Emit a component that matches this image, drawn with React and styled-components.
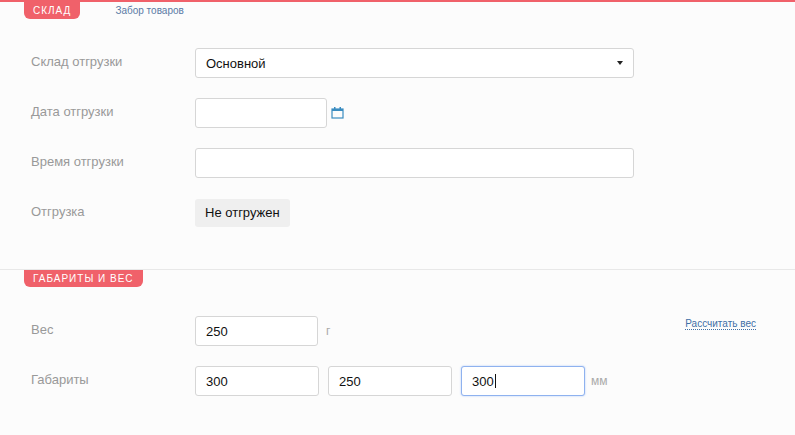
import React from "react";
import styled, { createGlobalStyle } from "styled-components";

const G = createGlobalStyle`
  body { margin:0; background:#fcfcfc; font-family:"Liberation Sans", Arial, sans-serif; }
`;
const Page = styled.div`width:795px;height:435px;overflow:hidden;border-top:2px solid #f0616a;box-sizing:border-box;`;
const Section = styled.div`position:relative;padding:${p=>p.$pad};border-top:${p=>p.$line?"1px solid #e8e8e8":"none"};`;
const TabBar = styled.div`display:flex;align-items:center;gap:35px;padding-left:24px;height:17px;`;
const Tab = styled.div`background:#f0616a;color:#fff;font-size:10px;letter-spacing:1px;font-weight:normal;padding:0 9px;height:17px;line-height:17px;border-radius:0 0 6px 6px;`;
const SubLink = styled.div`color:#5a7aa5;font-size:10px;`;
const Form = styled.div`display:flex;flex-direction:column;gap:20px;padding-left:31px;`;
const Row = styled.div`display:flex;align-items:center;height:30px;`;
const Label = styled.div`width:164px;color:#999;font-size:13px;margin-top:-3px;`;
const Box = styled.div`box-sizing:border-box;width:${p=>p.$w}px;height:30px;border:1px solid ${p=>p.$focus?"#8fb2ef":"#d6d6d6"};border-radius:3px;background:#fff;display:flex;align-items:center;padding:0 10px;font-size:13px;color:#111;${p=>p.$focus?"box-shadow:0 0 2px #a9c4f5;":""}`;
const Caret = styled.span`margin-left:auto;width:0;height:0;border-left:3px solid transparent;border-right:3px solid transparent;border-top:4px solid #222;`;
const Pill = styled.div`background:#efefef;border-radius:3px;padding:0 10px;height:28px;line-height:28px;font-size:13px;color:#111;`;
const Unit = styled.span`color:#aaa;font-size:12px;margin-left:${p=>p.$ml||8}px;`;
const Calc = styled.a`margin-left:auto;margin-right:39px;color:#3f6fa6;font-size:10px;border-bottom:1px dotted #3f6fa6;margin-top:-14px;`;
const Cursor = styled.span`display:inline-block;width:1px;height:14px;background:#111;margin-left:1px;`;

export default function App(){
  return <Page><G/>
    <Section $pad="0 0 41px">
      <TabBar><Tab>СКЛАД</Tab><SubLink>Забор товаров</SubLink></TabBar>
      <div style={{height:29}}/>
      <Form>
        <Row><Label>Склад отгрузки</Label><Box $w={439}>Основной<Caret/></Box></Row>
        <Row><Label>Дата отгрузки</Label><Box $w={132}/>
          <svg width="13" height="12" viewBox="0 0 13 12" style={{marginLeft:4}}><rect x="1" y="2" width="11" height="9" fill="none" stroke="#3a8cc0" strokeWidth="1.2"/><rect x="1" y="2" width="11" height="2" fill="#3a8cc0"/><rect x="3" y="0" width="1.5" height="3" fill="#3a8cc0"/><rect x="8.5" y="0" width="1.5" height="3" fill="#3a8cc0"/></svg>
        </Row>
        <Row><Label>Время отгрузки</Label><Box $w={439}/></Row>
        <Row><Label>Отгрузка</Label><Pill>Не отгружен</Pill></Row>
      </Form>
    </Section>
    <Section $line $pad="0">
      <TabBar><Tab>ГАБАРИТЫ И ВЕС</Tab></TabBar>
      <div style={{height:29}}/>
      <Form>
        <Row><Label>Вес</Label><Box $w={123}>250</Box><Unit>г</Unit><Calc>Рассчитать вес</Calc></Row>
        <Row><Label>Габариты</Label><Box $w={124}>300</Box><Box $w={124} style={{marginLeft:9}}>250</Box><Box $w={124} $focus style={{marginLeft:9}}>300<Cursor/></Box><Unit $ml={6}>мм</Unit></Row>
      </Form>
    </Section>
  </Page>;
}
